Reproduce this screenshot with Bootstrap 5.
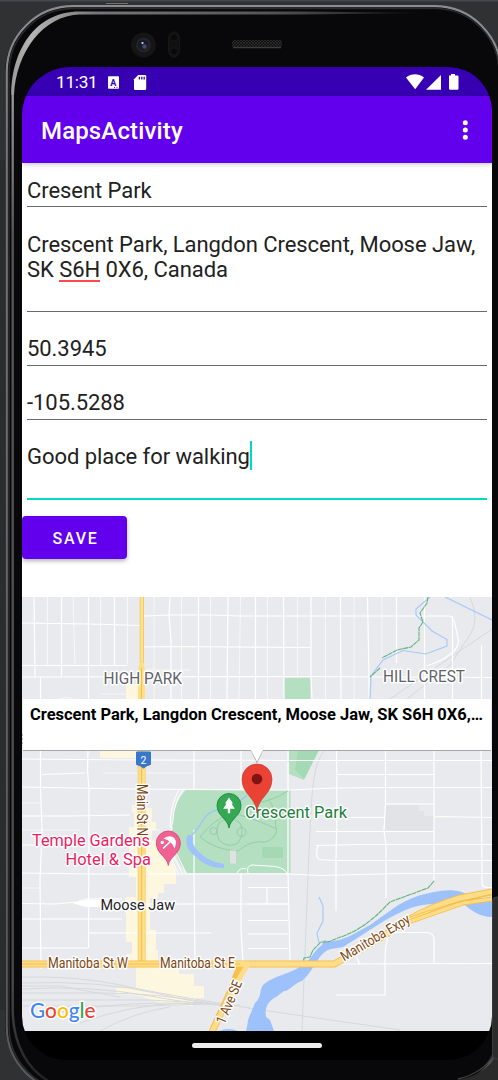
<!DOCTYPE html>
<html lang="en">
<head>
<meta charset="utf-8">
<meta name="viewport" content="width=device-width, initial-scale=1">
<title>MapsActivity</title>
<link href="https://cdn.jsdelivr.net/npm/bootstrap@5.3.0/dist/css/bootstrap.min.css" rel="stylesheet">
<style>
body{font-family:Roboto,"Liberation Sans",sans-serif;background:#303133;width:498px;height:1080px;overflow:hidden}
.device{width:498px;height:1080px;padding:67px 6px 0 22px}
.shell{left:0;top:0;z-index:0}
.phone-screen{z-index:1;height:993px;border-radius:48px 44px 44px 44px;background:#000}
.status{height:29px;background:#3700b3;padding:0 32px 0 34px;color:#fff}
.clock{font-size:17.3px;line-height:30px;width:51px;letter-spacing:-.3px;padding-top:1px}
.appbar{height:67px;background:#6200ee;padding:2px 22px 0 19px;color:#fff;box-shadow:0 1px 5px rgba(0,0,0,.25);z-index:2}
.appbar h1{font-size:24px;font-weight:500;letter-spacing:.15px;line-height:30px}
.content-area{background:#fff;height:434px}
.field{margin:0 5px;border-bottom:1px solid #6a6a6a;color:#212121;font-size:22px;line-height:25.5px;letter-spacing:-.06px;height:54px;padding-top:24px;white-space:nowrap}
.field.f-name{height:44px;padding-top:15px}
.field.f-addr{height:105px;padding-top:24.7px}
.field.f-note{height:80px;border-bottom:2px solid #03dac5}
.typo{display:inline-block;height:23px;box-shadow:0 2px 0 #ff4a4a}
.caret{display:inline-block;width:2.5px;height:29px;background:#03dac5;vertical-align:-6px;margin:-16px 0 -8px 0;transform:translateY(-8px)}
.btn-save{--bs-btn-color:#fff;--bs-btn-bg:#6200ee;--bs-btn-border-width:0;--bs-btn-border-radius:4px;width:105px;height:43px;margin-top:16px;font-size:16px;font-weight:500;letter-spacing:1.8px;box-shadow:0 2px 4px rgba(0,0,0,.3);padding:2px 0 0 2px}
.map{width:470px;height:434px}
.map text{font-family:Roboto,"Liberation Sans",sans-serif;paint-order:stroke;stroke:#fff;stroke-width:3px;stroke-linejoin:round}
.map .plain{stroke:none}
.navpill{width:130px;height:5px;border-radius:3px;background:#ececec;margin-top:12px}
</style>
</head>
<body>
<main class="device position-relative">
<svg class="shell position-absolute" width="498" height="1080" viewBox="0 0 498 1080">
  <defs>
    <linearGradient id="rim" gradientUnits="userSpaceOnUse" x1="10" y1="0" x2="440" y2="0"><stop offset="0" stop-color="#999"/><stop offset=".05" stop-color="#b5b5b3"/><stop offset=".2" stop-color="#777"/><stop offset=".6" stop-color="#555"/><stop offset="1" stop-color="#0a0a0a"/></linearGradient>
    <linearGradient id="side" x1="0" y1="0" x2="0" y2="1"><stop offset="0" stop-color="#8c8d90"/><stop offset=".15" stop-color="#77797b"/><stop offset="1" stop-color="#55575a"/></linearGradient>
    <linearGradient id="inner" gradientUnits="userSpaceOnUse" x1="0" y1="90" x2="0" y2="1080"><stop offset="0" stop-color="#999"/><stop offset=".15" stop-color="#555"/><stop offset=".9" stop-color="#4a4a4a"/><stop offset="1" stop-color="#222"/></linearGradient>
    <pattern id="mesh" width="3" height="3" patternUnits="userSpaceOnUse"><rect width="3" height="3" fill="#111"/><circle cx="1" cy="1" r=".7" fill="#484848"/><circle cx="2.500" cy="2.500" r=".5" fill="#3a3a3a"/></pattern>
  </defs>
  <rect width="498" height="1080" fill="#303133"/>
  <rect width="498" height="1.500" fill="#44484b"/>
  <rect y="160" width="6" height="850" fill="#2b2c2c"/>
  <rect x="5" y="5" width="497" height="1087" rx="68" fill="#08080a"/>
  <rect x="6.700" y="6.200" width="494" height="1086" rx="66" fill="none" stroke="url(#side)" stroke-width="2.200"/>
  <rect x="9" y="8.500" width="490" height="1082" rx="64" fill="none" stroke="#2b2b2d" stroke-width="1.600"/>
  <path d="M11.300 95C11.300 52 34 11.500 80 11.500H300L430 13L300 14.500H80C43 15.500 16 52 14 95Z" fill="url(#rim)"/>
  <path d="M12.700 94V1010C13 1045 28 1070 50 1082" fill="none" stroke="url(#inner)" stroke-width="2.400"/>
  <path d="M456 1080C475 1078 490 1068 498 1053V1080Z" fill="#2a2a2b"/>
  <path d="M458 1079Q482 1074 497 1052" fill="none" stroke="#444" stroke-width="1.300"/>
  <rect x="492.500" y="897" width="10" height="162" rx="4" fill="#2c2c2d" stroke="#444" stroke-width=".8"/>
  <path d="M106 3.500H128" stroke="#77706a"/>
  <circle cx="143.500" cy="45" r="12.500" fill="#151516"/><circle cx="143.500" cy="45" r="7.500" fill="#232428"/><circle cx="143" cy="45" r="5" fill="#171b27"/><circle cx="144.500" cy="46.500" r="2.200" fill="#434a66"/><circle cx="142.500" cy="43" r="1.100" fill="#dbe2f5"/>
  <rect x="168.500" y="32" width="11" height="25" rx="5.500" fill="#101011" stroke="#171718"/><circle cx="174" cy="37.500" r="3.800" fill="#09090a" stroke="#1a1a1b"/><circle cx="174" cy="51.500" r="3.800" fill="#09090a" stroke="#1a1a1b"/>
  <rect x="232" y="40" width="50" height="7.500" rx="2" fill="url(#mesh)"/><path d="M233 47.700H281" stroke="#484848"/>
</svg>

<section class="phone-screen position-relative overflow-hidden">
  <div class="status d-flex align-items-center">
    <span class="clock">11:31</span>
    <svg width="50" height="29" viewBox="107 67 50 29"><rect x="108" y="76.300" width="11" height="12.400" rx=".8" fill="#fff"/><text x="110.200" y="85.600" font-size="9" font-weight="700" fill="#3700b3" font-family="Roboto">A</text><path d="M114 87.500h1M116.500 87.500h1" stroke="#3700b3" stroke-width=".8"/><path d="M138.200 75H145q1.200 0 1.200 1.200V88.800q0 1.200-1.200 1.200H135.200q-1.200 0-1.200-1.200V79.200Z" fill="#fff"/><path d="M139.400 76.800v2.700M141.800 76.800v2.700M144.200 76.800v2.700" stroke="#3700b3" stroke-width="1.300"/></svg>
    <svg class="ms-auto" width="56" height="29" viewBox="404 67 56 29" fill="#fff"><path d="M406 77.500C411.500 73.200 418.500 73.200 424 77.500L415.200 89.300Z"/><path d="M441 75V89.700H426Z"/><path d="M449 75.500h2v-1.600h4v1.600h2.300q1.200 0 1.200 1.200V88.500q0 1.200-1.200 1.200H450.200q-1.200 0-1.200-1.200Z"/></svg>
  </div>
  <header class="appbar position-relative d-flex align-items-center justify-content-between">
    <h1 class="m-0">MapsActivity</h1>
    <svg width="10" height="22" viewBox="0 0 10 22" fill="#fff"><circle cx="5.300" cy="2.800" r="2.500"/><circle cx="5.300" cy="10" r="2.500"/><circle cx="5.300" cy="17.200" r="2.500"/></svg>
  </header>
  <div class="content-area">
    <div class="field f-name">Cresent Park</div>
    <div class="field f-addr">Crescent Park, Langdon Crescent, Moose Jaw,<br>SK <span class="typo">S6H</span> 0X6, Canada</div>
    <div class="field">50.3945</div>
    <div class="field">-105.5288</div>
    <div class="field f-note">Good place for walking<span class="caret"></span></div>
    <button class="btn btn-save d-block" type="button">SAVE</button>
  </div>
  <svg class="map d-block" viewBox="22 597 470 434">
    <rect x="22" y="597" width="470" height="434" fill="#e8eaed"/>
    <!-- commercial blocks -->
    <g fill="#fef7e0">
      <path d="M124 684h14v15h-12v-12zM100 749h38v9h-38zM132 808h20v14h4v8h-4v10h22v28h2v16h-12v9h-6v5h-8v32h6v20h2v10h10v6h11v8h15v12h10v12h-7l-5 8-30-2-20-8-26-2v-6h20v-24h-10v-10h6v-12h-6v-45h10v-20h-7v-50h5v-14h-2v-8h8z"/>
    </g>
    <path d="M385 805H434V831H385Z" fill="#e1e3e6"/><path d="M419 805H434V816H424V811H419Z" fill="#e8eaed"/>
    <!-- parks -->
    <g fill="#b4dfc0"><path d="M284 678H310.500V699H284Z"/><path d="M289 750H319L304 780L289 774Z"/><path d="M187 789L290.500 790V873H187C178 864 172 848 172 828C172 811 177 798 187 789Z"/></g>
    <path d="M298 750H319L304 779L295 770ZM262 847h21v11h-21z" fill="#a5d9b3"/>
    <!-- rail lines -->
    <g fill="none" stroke="#d6d9dc" stroke-width="1">
      <path d="M492 629L390 699M470 597Q480 620 470 635L450 665L407 699M325 750C311 765 312 800 309 850L302 1031M248 1008L400 1030"/>
      <path d="M22 977Q80 976 120 985T250 1008M22 983Q100 980 160 994T240 1005M22 989Q90 985 150 996T235 1005M22 993H100Q160 993 210 1003M22 1000H150L220 1004M22 1006H140L210 1004M60 1012Q130 1000 200 1004M80 1023Q130 1005 180 1003M100 1031Q135 1012 170 1007M22 986H60L120 997"/>
    </g>
    <!-- local streets -->
    <g fill="none" stroke="#fff" stroke-width="1.200">
      <path d="M34 597L35 677M61.500 597V676M88.500 597V700M114.500 597V665M40.500 677V788L42 830L40 880L41 969M88 750L87.500 770L89 790L88.500 948M170 597L169 616L171 640V699M198.500 597V699M228 597L227 699M255.500 597V699M283.500 597L284 699M311 597V677L312 699M340.500 597V630L341 699M367.500 597L369 677V699M396.500 597V663M424.500 597V699M452.500 616V699M481.500 645V699M194 750V789M194 830V873L195 963M241 750V789M241 873V930L243 961"/>
      <path d="M22 623L90 624L140 625.500M22 665.500H127M22 677L300 676.500L492 677.500M144 616L170 615H210L240 616H449Q454 616 456 629L458.500 640C459 651 447 659 427 666M144 647L170 646.500L310 647.500M22 759L138 760L288 760.500H492M42 774.500L85 773M22 787L130 789L289 790L336 788L385 787.500H492M22 816H70L130 815M22 845H40M22 873L88 874L288 874L320 875.500L400 873.500H492M22 903.500L55 904L88 901M74 903L86 899H122M74 903L86 906M122 904H240H288M88 919H122M22 919H88M88 933H211M22 948H88"/>
      <path d="M74 903L88 900.500H104V906.500H86Z" fill="#fff"/>
      <path d="M288 750V873L290 963M336.500 750L337 812L336 860V904M385.500 750V803M385.500 803L384 831L386 845V898M434 750V880M481 750L482 873M336 774.500H434M385 804H434M336 817.500H385M434 816.500L492 817.500M316 831.500H434M316 845.500L360 844.500H492M318 845.500Q316 852 317 857L319 859.500L336 860.500H492M482 874V884Q483 887 487 887.500H492M248 887.500H288M248 904H288M248 920.500H288M288 934H248M248 948.500H288M267 887V904M336 890V911M336 964L492 963.500M385 963V995H336M385 963C385 939 388 932 398 932.500H426Q434 932.500 434 940V963M353 953Q360 961 359 965"/>
    </g>
    <g fill="none" stroke="#fff" stroke-width=".9" opacity=".7"><path d="M47.500 597V665M73 597L75 665M100.500 597V665M127.500 597V665M154 597V699M181.500 597V699M210.500 597V699M240.500 597L239 699M267.500 597V699M297.500 597V677M325.500 597V699M354 597V699M382 597V660M144 670H190M100 694H126M57 700Q66 695 75 700M40.500 803H22M22 888H40M103 773H194M22 830H80M140 830H160"/></g>
    <path d="M183 790Q174 803 173 820Q171 826 172 830M179 790Q170 805 170 828M182 873Q175 860 172 850M178 873Q173 862 170 855M186 873Q181 862 175 851M248 873Q246 866 252 865L268 866Q283 866 287 873M237 873Q240 867 246 869" stroke="#fff" fill="none"/>
    <!-- park paths and pond -->
    <g fill="none" stroke="#8dcaa0" stroke-width=".8"><path d="M200 837Q222 810 240 815T277 829Q275 840 265 842Q250 840 238 851Q215 850 200 837M210 831a3.500 3.500 0 1 0 7 0a3.500 3.500 0 1 0-7 0M237 832a4.500 4.500 0 1 0 9 0a4.500 4.500 0 1 0-9 0M219 823Q229 814 240 823Q245 833 238 843Q228 849 219 840Q215 830 219 823M250 805Q275 800 288 791M269 801Q275 805 276 829"/></g>
    <path d="M192 835C203 825 203 812 218 810Q230 811 247 795" fill="none" stroke="#9fc4fa" stroke-width="1.300"/>
    <path d="M187 836Q191 833 193 837Q191 844 198 851Q208 862 224 864V868Q207 869 195 856Q184 848 187 836Z" fill="#9ec2fb"/>
    <path d="M230 850.500h6v13h-6z" fill="#dfe3e5"/>
    <!-- waterways -->
    <g fill="none" stroke="#a8c9fa" stroke-width="1.200"><path d="M430 597L416 609V615L432 631L447 639.500V646L426 654L403 650.500L383 660L371 676L370 699M445 597L492 620M319 897L323 906V921L317 933L319 943"/></g>
    <path d="M492 916V900L470 896C462 891 453 889 440 891C420 894 407 899 394 908L370 925L350 936C340 940 332 943 324 940L322 945C314 950 310 962 302 965C294 973 272 976 263 985C259 991 262 997 255 1003L248 1020L247 1031H274L270 1020L266 1017C264 1006 270 1000 276 997L284 991C290 991 294 983 302 981C315 970 318 952 331 949L343 947L384 921C406 908 420 903 440 904L463 903C470 910 480 917 492 917Z" fill="#9dc1fb"/>
    <path d="M219 1031Q228 1027 238 1031ZM246 1031L250 1015V1031Z" fill="#9dc1fb"/>
    <g fill="none" stroke="#64b17e" stroke-width="1.100"><path d="M428 597L427 603L420 613L423 622L419 628V640L411 647L397 650L382 658M380 668L370 677M434 881L428 888L390 902L379 913Q360 931 338 938L328 942L321 942L313 950L310 957L304 958L303 963" stroke-dasharray="5 .5"/></g>
    <!-- arterial roads -->
    <g fill="none" stroke-linejoin="round">
      <path d="M141.800 597V663" stroke="#f9c74f" stroke-width="4.200"/><path d="M141.800 597V663" stroke="#ffe193" stroke-width="2.500"/>
      <path d="M139.600 663L138 670V699H145V670L143.600 663Z" fill="#fddf87"/><path d="M141.500 668V699" stroke="#f5bd44"/>
      <path d="M141.700 750V964" stroke="#f9d070" stroke-width="8"/><path d="M141.700 750V964" stroke="#ffdf8b" stroke-width="6"/><path d="M141.700 750V964" stroke="#f3bd49" stroke-width="1"/>
      <g stroke="#f6c04c" stroke-width="7"><path d="M22 964H334Q350 956 385 935L410 919Q430 907 460 898L492 892"/><path d="M241 964L229 995L212 1032"/></g>
      <g stroke="#ffdd88" stroke-width="5"><path d="M22 964H334Q350 956 385 935L410 919Q430 907 460 898L492 892"/><path d="M237 964H248L239 979L229 997L212 1032"/></g>
      <path d="M22 964H240" stroke="#f4bc48"/>
      <path d="M400 925Q440 911 463 903L492 899" stroke="#f6c04c" stroke-width="5"/><path d="M400 925Q440 911 463 903L492 899" stroke="#ffdd88" stroke-width="3"/>
      <path d="M410 917Q440 906 492 894" stroke="#f3bd49" stroke-width=".8"/>
    </g>
    <!-- labels -->
    <g fill="#5f6368" font-size="16.300"><text x="103.500" y="684.200" textLength="78.500" lengthAdjust="spacingAndGlyphs">HIGH PARK</text><text x="383" y="682.200" textLength="82" lengthAdjust="spacingAndGlyphs">HILL CREST</text></g>
    <text x="100.500" y="909.500" font-size="15.500" fill="#202124" textLength="74.500" lengthAdjust="spacingAndGlyphs">Moose Jaw</text>
    <g fill="#7b4510" font-size="14" stroke-width=".2"><text x="48" y="967.600" textLength="80" lengthAdjust="spacingAndGlyphs">Manitoba St W</text><text x="160" y="967.600" textLength="75" lengthAdjust="spacingAndGlyphs">Manitoba St E</text>
      <text transform="translate(137.200 784) rotate(90)" textLength="52" lengthAdjust="spacingAndGlyphs">Main St N</text>
      <text transform="translate(344 961.500) rotate(-30.500)" textLength="78" lengthAdjust="spacingAndGlyphs">Manitoba Expy</text>
      <text transform="translate(224.500 1025) rotate(-67)" textLength="46" lengthAdjust="spacingAndGlyphs">1 Ave SE</text></g>
    <g fill="#e91e63" font-size="17"><text x="32" y="845.700" textLength="118" lengthAdjust="spacingAndGlyphs">Temple Gardens</text><text x="65.500" y="865" textLength="85.500" lengthAdjust="spacingAndGlyphs">Hotel &amp; Spa</text></g>
    <text x="245" y="818" font-size="17" fill="#188038" textLength="102" lengthAdjust="spacingAndGlyphs">Crescent Park</text>
    <!-- highway shield -->
    <path d="M136.500 752H150.500V764.500Q147 765 143.500 768Q140 765 136.500 764.500Z" fill="#3877c9" stroke="#3877c9" stroke-linejoin="round"/>
    <text class="plain" x="140.500" y="763.800" font-size="10.500" fill="#fff">2</text>
    <!-- place pins -->
    <path d="M229 828C228 819 217 816 217 805.500A12 12 0 0 1 241 805.500C241 816 230 819 229 828Z" fill="#34a853" stroke="#188038" stroke-width=".8"/>
    <path d="M229 797.500L233 803.500H231.500L234.800 808.800H230.200V813.300H227.800V808.800H223.200L226.500 803.500H225Z" fill="#fff"/>
    <path d="M168.300 865.500C167.500 857 156.300 854 156.300 843A12 12 0 0 1 180.300 843C180.300 854 169 857 168.300 865.500Z" fill="#f06292" stroke="#dd3f78" stroke-width=".8"/>
    <path d="M163.500 838.500Q170 834 174.500 838.200Q177.500 842.500 174.300 848.500Q173.500 845 170.500 842Q167 839 163.500 838.500Z" fill="#fff"/><path d="M171 841L163 848.500" stroke="#fff" stroke-width="1.700"/><circle cx="162.300" cy="842.500" r="1.700" fill="#fff"/>
    <!-- selected marker and info window -->
    <path d="M257 813C256.500 797 242 795 242 779A15 15 0 0 1 272 779C272 795 257.500 797 257 813Z" fill="#ea4335" stroke="#c5372c" stroke-width=".6"/><circle cx="257" cy="779" r="5.300" fill="#811411"/>
    <path d="M22.500 735h1M22.500 739h1M22.500 743h1" stroke="#222"/>
    <path d="M23 750.500H251.300L257 762.500L262.700 750.500H491" fill="none" stroke="#a5a7a9"/>
    <path d="M23 699H491V750H263L257 761.500L251 750H23Z" fill="#fff"/>
    <text class="plain" x="30" y="720" font-size="17" font-weight="700" fill="#000" textLength="453" lengthAdjust="spacingAndGlyphs">Crescent Park, Langdon Crescent, Moose Jaw, SK S6H 0X6,…</text>
    <text x="30" y="1017.500" font-size="21" font-weight="500" textLength="65.500" lengthAdjust="spacingAndGlyphs" style="font-family:Lato,sans-serif"><tspan fill="#4285f4">G</tspan><tspan fill="#ea4335">o</tspan><tspan fill="#fbbc04">o</tspan><tspan fill="#4285f4">g</tspan><tspan fill="#34a853">l</tspan><tspan fill="#ea4335">e</tspan></text>
  </svg>
  <div class="navpill mx-auto"></div>
</section>
</main>
<script src="https://cdn.jsdelivr.net/npm/bootstrap@5.3.0/dist/js/bootstrap.bundle.min.js"></script>
</body>
</html>
